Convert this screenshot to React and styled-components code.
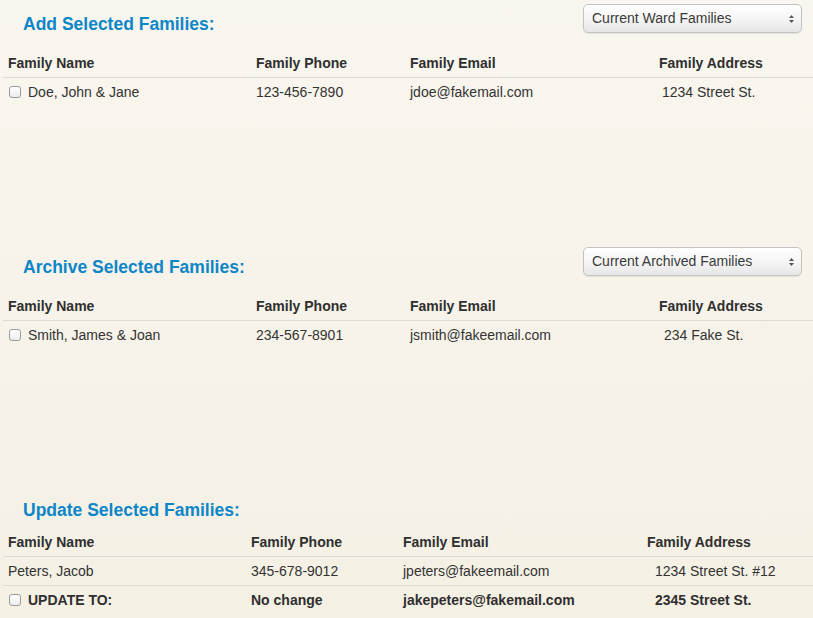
import React from 'react'
import styled, { createGlobalStyle } from 'styled-components'

const Global = createGlobalStyle`
    html, body {
        margin: 0;
        padding: 0;
    }
    body {
        background: linear-gradient(180deg, #f9f6ef 0%, #f7f3ea 50%, #f5f0e4 100%);
        min-height: 618px;
        font-family: "Liberation Sans", Arial, sans-serif;
        color: #333;
        font-size: 14px;
    }
`;

const Page = styled.div`
    width: 813px;
    overflow: hidden;
`;

const Section = styled.section`
    height: ${p => (p.$last ? 'auto' : '243px')};
    padding-top: 4px;
    box-sizing: border-box;
`;

const TopBar = styled.div`
    display: flex;
    align-items: center;
    justify-content: space-between;
    height: 29px;
    padding-right: 11px;
`;

const Heading = styled.h2`
    margin: 0 0 0 23px;
    padding-top: ${p => p.$shift}px;
    font-size: 17.5px;
    font-weight: bold;
    color: #0d86c8;
`;

const SelectWrap = styled.div`
    position: relative;
    width: 219px;
    height: 29px;
`;

const Select = styled.select`
    appearance: none;
    -webkit-appearance: none;
    width: 100%;
    height: 100%;
    box-sizing: border-box;
    padding: 0 24px 2px 8px;
    border: 1px solid #c3c3c3;
    border-radius: 5px;
    background: linear-gradient(180deg, #ffffff 0%, #f4f4f4 55%, #e6e6e6 100%);
    box-shadow: 0 1px 1px rgba(0, 0, 0, 0.08);
    font-family: "Liberation Sans", Arial, sans-serif;
    font-size: 14px;
    color: #3a3a3a;
    outline: none;
`;

const Arrows = styled.svg`
    position: absolute;
    right: 7px;
    top: 10px;
    pointer-events: none;
`;

const Table = styled.div`
    margin-top: ${p => p.$gap}px;
    margin-left: 3px;
`;

const Row = styled.div`
    display: grid;
    grid-template-columns: ${p => p.$cols};
    align-items: center;
    height: 29px;
    padding-bottom: ${p => (p.$head ? 0 : 1)}px;
    box-sizing: border-box;
    border-bottom: ${p => (p.$line ? '1px solid #dcdad4' : 'none')};
    font-weight: ${p => (p.$bold ? 'bold' : 'normal')};
    color: ${p => (p.$bold ? '#2f2f2f' : '#333')};
`;

const Cell = styled.div`
    padding-left: ${p => p.$pad || 5}px;
    display: flex;
    align-items: center;
    white-space: nowrap;
`;

const Check = styled.input.attrs({ type: 'checkbox' })`
    appearance: none;
    -webkit-appearance: none;
    width: 12px;
    height: 12px;
    margin: 0 7px 0 1px;
    border: 1px solid #9a9a9a;
    border-radius: 3px;
    background: linear-gradient(180deg, #ffffff, #ececec);
    box-sizing: border-box;
`;

const Picker = ({ label }) => (
    <SelectWrap>
        <Select defaultValue={label}>
            <option>{label}</option>
        </Select>
        <Arrows width="7" height="10" viewBox="0 0 7 10">
            <path d="M3.5 1 L6 4 L1 4 Z" fill="#555" />
            <path d="M3.5 9 L6 6 L1 6 Z" fill="#555" />
        </Arrows>
    </SelectWrap>
);

const colsA = '248px 154px 249px 1fr';
const colsB = '243px 152px 244px 1fr';

const Head = ({ cols }) => (
    <Row $cols={cols} $head $line $bold>
        <Cell>Family Name</Cell>
        <Cell>Family Phone</Cell>
        <Cell>Family Email</Cell>
        <Cell>Family Address</Cell>
    </Row>
);

const FamilyRow = ({ cols, item, check, line, bold, addrPad }) => (
    <Row $cols={cols} $line={line} $bold={bold}>
        <Cell>{check && <Check />}{item.name}</Cell>
        <Cell>{item.phone}</Cell>
        <Cell>{item.email}</Cell>
        <Cell $pad={addrPad}>{item.address}</Cell>
    </Row>
);

export default function App() {
    return (
        <Page>
            <Global />
            <Section>
                <TopBar>
                    <Heading $shift={11}>Add Selected Families:</Heading>
                    <Picker label="Current Ward Families" />
                </TopBar>
                <Table $gap={16}>
                    <Head cols={colsA} />
                    <FamilyRow cols={colsA} check addrPad={8}
                        item={{ name: 'Doe, John & Jane', phone: '123-456-7890', email: 'jdoe@fakemail.com', address: '1234 Street St.' }} />
                </Table>
            </Section>
            <Section>
                <TopBar>
                    <Heading $shift={11}>Archive Selected Families:</Heading>
                    <Picker label="Current Archived Families" />
                </TopBar>
                <Table $gap={16}>
                    <Head cols={colsA} />
                    <FamilyRow cols={colsA} check addrPad={10}
                        item={{ name: 'Smith, James & Joan', phone: '234-567-8901', email: 'jsmith@fakeemail.com', address: '234 Fake St.' }} />
                </Table>
            </Section>
            <Section $last>
                <TopBar>
                    <Heading $shift={12}>Update Selected Families:</Heading>
                </TopBar>
                <Table $gap={9}>
                    <Head cols={colsB} />
                    <FamilyRow cols={colsB} line addrPad={13}
                        item={{ name: 'Peters, Jacob', phone: '345-678-9012', email: 'jpeters@fakeemail.com', address: '1234 Street St. #12' }} />
                    <FamilyRow cols={colsB} check bold addrPad={13}
                        item={{ name: 'UPDATE TO:', phone: 'No change', email: 'jakepeters@fakemail.com', address: '2345 Street St.' }} />
                </Table>
            </Section>
        </Page>
    )
}
